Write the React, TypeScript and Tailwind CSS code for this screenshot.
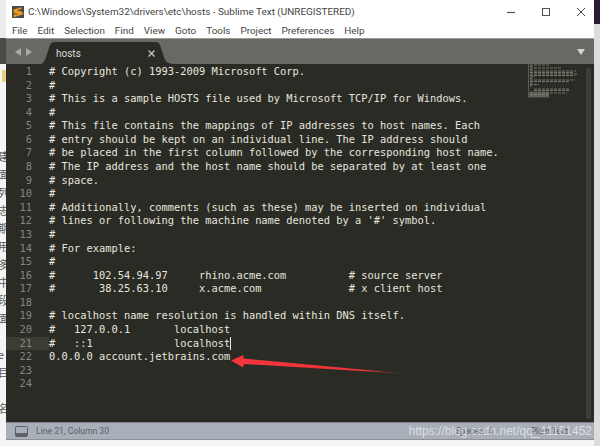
const lines = [
  '# Copyright (c) 1993-2009 Microsoft Corp.',
  '#',
  '# This is a sample HOSTS file used by Microsoft TCP/IP for Windows.',
  '#',
  '# This file contains the mappings of IP addresses to host names. Each',
  '# entry should be kept on an individual line. The IP address should',
  '# be placed in the first column followed by the corresponding host name.',
  '# The IP address and the host name should be separated by at least one',
  '# space.',
  '#',
  '# Additionally, comments (such as these) may be inserted on individual',
  "# lines or following the machine name denoted by a '#' symbol.",
  '#',
  '# For example:',
  '#',
  '#      102.54.94.97     rhino.acme.com          # source server',
  '#       38.25.63.10     x.acme.com              # x client host',
  '',
  '# localhost name resolution is handled within DNS itself.',
  '#   127.0.0.1       localhost',
  '#   ::1             localhost',
  '0.0.0.0 account.jetbrains.com',
  '',
  '',
];

const menu = ['File', 'Edit', 'Selection', 'Find', 'View', 'Goto', 'Tools', 'Project', 'Preferences', 'Help'];
const sideChars = ['建', '面', '列', '志', '期', '用', '多', '中', '段', '面', '', 'e', '目', '', '名'];

// rows of the minimap: [y, x, width]
const minimap = [
  [1, 1, 19], [2.5, 1, 2], [4, 1, 31], [5.5, 1, 2], [7, 1, 46], [8.5, 1, 44], [10, 1, 47], [11.5, 1, 45], [13, 1, 5],
  [14.5, 1, 2], [16, 1, 45], [17.5, 1, 40], [19, 1, 2], [20.5, 1, 9], [22, 1, 2], [25, 5, 36], [26.5, 5, 36],
  [29, 1, 37], [30.5, 1, 20], [32, 1, 20],
];

export default function App() {
  return (
    <div className="relative w-[600px] h-[446px] overflow-hidden bg-[#f4f4f4] flex font-['Roboto','Noto_Sans',sans-serif]">
      {/* page behind the window, left side */}
      <div className="w-[6px] shrink-0 flex flex-col overflow-hidden">
        <div className="h-[38px] shrink-0 bg-[#ececec]" />
        <div className="h-[26px] shrink-0 bg-[#4b4b46]" />
        <div className="ml-[2px] mt-[6px] h-[12px] w-[4px] shrink-0 bg-[#e9d27e]" />
        <div className="mt-[65px] flex flex-col items-end">
          {sideChars.map((c, i) => (
            <div key={i} className="h-[18px] w-[6px] overflow-hidden text-[11px] leading-[18px] text-[#555] font-['Noto_Sans_CJK_SC',sans-serif] flex justify-end whitespace-pre">
              <span className="shrink-0 w-[12px] -mr-[4px]">{c}</span>
            </div>
          ))}
        </div>
      </div>

      {/* sublime window */}
      <div className="w-[588px] h-[440px] shrink-0 flex flex-col border-b border-[#8c8f94]">
        <div className="h-[24px] shrink-0 bg-white flex items-center pl-[6px] pr-[7px]">
          <svg width="12" height="12" viewBox="0 0 12 12" className="shrink-0">
            <rect width="12" height="12" fill="#4a4a48" />
            <path d="M9.6 2 L2.6 4.2 V6.4 L9.2 8 L2.6 10 V8.2 M2.6 4.6 L9.4 6.4 V8" fill="none" stroke="#f09a1f" strokeWidth="1.8" />
          </svg>
          <span className="ml-[4px] text-[9.95px] leading-none text-[#444] whitespace-pre">C:\Windows\System32\drivers\etc\hosts - Sublime Text (UNREGISTERED)</span>
          <div className="ml-auto flex items-center gap-[25px] pr-[1px]">
            <svg width="10" height="10" viewBox="0 0 10 10"><path d="M1 5.5H9" stroke="#555" strokeWidth="1.2" /></svg>
            <svg width="10" height="10" viewBox="0 0 10 10"><rect x="1.5" y="1.5" width="7" height="7" fill="none" stroke="#555" strokeWidth="1" /></svg>
            <svg width="10" height="10" viewBox="0 0 10 10"><path d="M1 1L9 9M9 1L1 9" stroke="#444" strokeWidth="1" /></svg>
          </div>
        </div>
        <div className="h-[14px] shrink-0 bg-white flex items-center gap-[10px] pl-[6px] text-[9.9px] leading-none text-[#444]">
          {menu.map((m) => (
            <span key={m}>{m}</span>
          ))}
        </div>
        <div className="h-[26px] shrink-0 bg-[#686963] border-t border-[#9a9a96] flex items-end relative">
          <div className="flex items-center gap-[5px] self-center pl-[9px] mt-[1px]">
            <svg width="6" height="8" viewBox="0 0 6 8"><path d="M6 0V8L0 4Z" fill="#a9a9a5" /></svg>
            <svg width="6" height="8" viewBox="0 0 6 8"><path d="M0 0V8L6 4Z" fill="#a9a9a5" /></svg>
          </div>
          <div className="absolute left-[34px] bottom-0 w-[136px] h-[22px]">
            <svg width="136" height="22" viewBox="0 0 136 22" className="absolute inset-0">
              <path d="M0 22C3 22 4 20 6 15L10 3C11 1 12 0 15 0H115C118 0 119 1 120 3L124 15C126 20 127 22 136 22Z" fill="#2a2b25" />
            </svg>
            <div className="relative flex items-center h-full pl-[16px] pr-[21px] text-[10px] text-[#dcdcd8] justify-between">
              <span>hosts</span>
              <svg width="7" height="7" viewBox="0 0 7 7"><path d="M0.5 0.5L6.5 6.5M6.5 0.5L0.5 6.5" stroke="#c4c4c0" strokeWidth="1.3" /></svg>
            </div>
          </div>
          <svg width="8" height="6" viewBox="0 0 8 6" className="ml-auto mr-[9px] self-center mt-[1px]"><path d="M0 0H8L4 6Z" fill="#d4d4d0" /></svg>
        </div>

        <div className="flex-1 min-h-0 bg-[#2a2b25] relative pt-[1px] font-['DejaVu_Sans_Mono','Liberation_Mono',monospace] text-[10.38px] leading-[13.58px] overflow-hidden">
          {lines.map((line, i) => (
            <div key={i} className="flex h-[13.58px]">
              <div className={i === 20 ? 'w-[43px] shrink-0 text-right pr-[17px] text-[#85857f] bg-[#3b3c34]' : 'w-[43px] shrink-0 text-right pr-[17px] text-[#85857f]'}>
                {i + 1}
              </div>
              <div className="relative whitespace-pre text-[#e6e6de]">
                {line}
                {i === 20 && <span className="absolute right-[-1px] top-0 h-[13.58px] w-px bg-[#e6e6de]" />}
              </div>
            </div>
          ))}

          {/* minimap */}
          <svg width="50" height="34" viewBox="0 0 50 34" className="absolute left-[522px] top-0">
            <rect x="0" y="27.5" width="21" height="6" fill="#55564f" />
            <path d="M0.5 0V27" stroke="#5e5e58" />
            {minimap.map(([y, x, w], i) => (
              <path key={i} d={`M${x + 1} ${y}h${w}`} stroke="#77776f" strokeWidth="1" strokeDasharray="3 1" />
            ))}
          </svg>

          {/* scrollbar */}
          <div className="absolute left-[580px] top-[3px] bottom-[3px] w-[5px] rounded-sm bg-[#3c3d37]" />
        </div>

        <div className="h-[17px] shrink-0 bg-[#a9afb9] border-t border-[#7c8087] flex items-center pl-[9px] text-[8.6px] text-[#5a5e66]">
          <svg width="13" height="11" viewBox="0 0 13 11" className="shrink-0">
            <rect x="0.5" y="0.5" width="12" height="10" rx="1" fill="none" stroke="#5d6068" />
            <rect x="1" y="7" width="11" height="3.5" fill="#5d6068" />
          </svg>
          <span className="ml-[8px]">Line 21, Column 30</span>
          <span className="ml-auto">Spaces: 4</span>
          <span className="ml-[38px] mr-[26px]">Plain Text</span>
        </div>
      </div>

      {/* page behind the window, right side */}
      <div className="w-[6px] shrink-0 flex flex-col">
        <div className="h-[24px] shrink-0 bg-[#2c1b35]" />
        <div className="flex-1 bg-[#dcdcdc]" />
      </div>

      {/* annotation arrow */}
      <svg width="600" height="446" viewBox="0 0 600 446" className="absolute left-0 top-0 pointer-events-none">
        <defs>
          <linearGradient id="tail" x1="231" y1="360" x2="410" y2="374" gradientUnits="userSpaceOnUse">
            <stop offset="0" stopColor="#f4363c" />
            <stop offset="0.75" stopColor="#ee3338" />
            <stop offset="1" stopColor="#ee3338" stopOpacity="0.1" />
          </linearGradient>
        </defs>
        <path d="M231 360.5L243.5 355L243.5 358.5L410 374L244 364L243 367.5Z" fill="url(#tail)" />
      </svg>

      {/* watermark */}
      <span className="absolute right-[8px] top-[424px] text-[12px] leading-[15px] text-white/60 font-['Liberation_Sans',sans-serif]">https://blog.csdn.net/qq_41161452</span>
    </div>
  );
}
